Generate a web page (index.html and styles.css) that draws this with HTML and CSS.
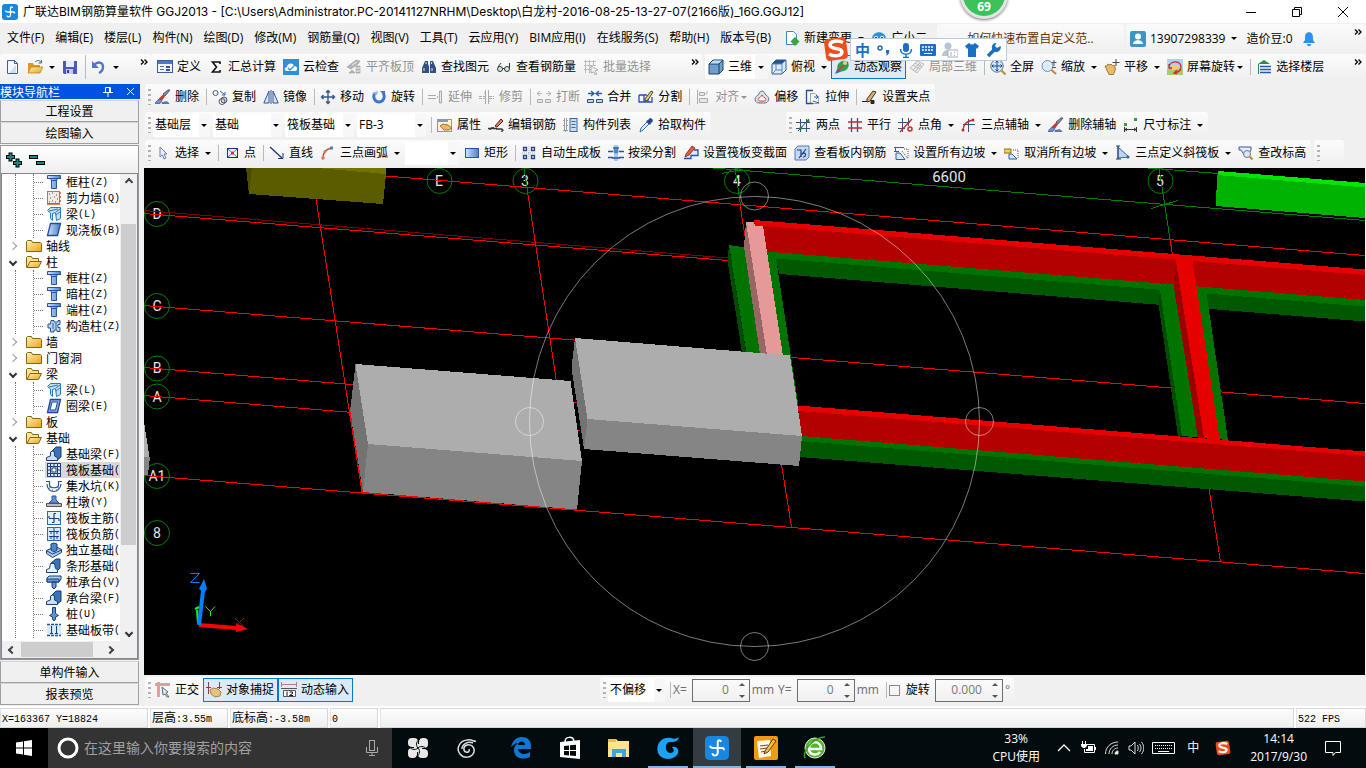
FILE: index.html
```html
<!DOCTYPE html>
<html lang="zh-CN">
<head>
  <meta charset="UTF-8">
  <title>广联达BIM钢筋算量软件 GGJ2013</title>
  <link rel="stylesheet" href="styles.css">
</head>
<body>

<!-- icon sprite -->
<svg class="sprite" aria-hidden="true">
  <defs>
    <linearGradient id="g-blue" x1="0" x2="1"><stop offset="0" stop-color="#cfe4fb"/><stop offset="1" stop-color="#4a7ec8"/></linearGradient>
    <linearGradient id="g-gold" x1="0" y1="0" x2="1" y2="1"><stop offset="0" stop-color="#fff3b0"/><stop offset="1" stop-color="#eba313"/></linearGradient>
  </defs>
  <symbol id="logo" viewBox="0 0 16 16"><rect width="16" height="16" rx="3" fill="#1787e0"/><path d="M8.500 4v7c0 2.500-3.500 2.500-3.500.5M3.500 6.500c0 1.500 1 1.500 2 1.500h7M12.500 9.500V8M8.500 4c0-1.500 2-1.500 2 0" fill="none" stroke="#fff" stroke-width="1.300"/></symbol>
  <symbol id="doc" viewBox="0 0 16 16"><path d="M3.500 1.500h7l3 3v10h-10z" fill="#f6faff" stroke="#3c5f94"/><path d="M10.500 1.500v3h3" fill="none" stroke="#3c5f94"/><path d="M12 6v8H5z" fill="#cfdff2"/></symbol>
  <symbol id="open" viewBox="0 0 16 16"><path d="M1 14V4h5l1 2h6v8z" fill="#d99b26"/><path d="M1 14l3-6h12l-3 6z" fill="url(#g-gold)" stroke="#b47a1b" stroke-width=".7"/><path d="M8 3c2-2 4-2 6 0M14.500 1v3h-3" fill="none" stroke="#4c6680"/></symbol>
  <symbol id="save" viewBox="0 0 16 16"><path d="M1 2h14v13H2l-1-1z" fill="#4c58b5"/><rect x="4" y="2" width="8" height="6" fill="#e6ecff"/><rect x="4" y="10" width="7" height="5" fill="#c7cbe2"/><rect x="5" y="11" width="2" height="3" fill="#333f91"/></symbol>
  <symbol id="undo" viewBox="0 0 16 16"><path d="M3 6c4-4 9-3 9 2 0 3-2 5-4 6" fill="none" stroke="#4b78cf" stroke-width="2.400"/><path d="M1 2v7h7z" fill="#4b78cf"/></symbol>
  <symbol id="define" viewBox="0 0 16 16"><rect x=".5" y="1.500" width="15" height="12" fill="#eef3fc" stroke="#3d5c9e"/><path d="M1 2h14v3H1z" fill="#4a79ca"/><path d="M3 7.500h4M3 10.500h4" stroke="#6d6d6d"/><path d="M9 7h4v2H9zM9 10h4v2H9z" fill="#315492"/></symbol>
  <symbol id="sigma" viewBox="0 0 16 16"><path d="M12 5V3H4.500L8.500 8l-4 5H12v-2" fill="none" stroke="#111" stroke-width="1.600"/></symbol>
  <symbol id="cloud" viewBox="0 0 16 16"><rect width="16" height="16" fill="#2d8fd8"/><path d="M4 12c-3 0-3-4 0-4 0-4 6-5 7-1 4 0 4 5 1 5z" fill="#fff"/><path d="M5 9l2 2 4-4" fill="none" stroke="#2d8fd8" stroke-width="1.300"/></symbol>
  <symbol id="slabtop" viewBox="0 0 16 16"><path d="M1 8l9-7 4 1-2 3-7 5zM3 14l3-3 3 3zM10 7h4v7h-4z" fill="#b5b5b5" stroke="#9a9a9a" stroke-width=".6"/><path d="M6 6l5-3M10 9h4M10 12h4" stroke="#eee"/></symbol>
  <symbol id="find" viewBox="0 0 16 16"><path d="M4 2h3v3l1 2v7H1V9zM9 2h3l3 7v5H9V5z" fill="#31507d"/><path d="M3 9v3M11 9v3M5 3v2M10.500 3v2" stroke="#bcd1f1" stroke-width="1.200"/></symbol>
  <symbol id="glasses" viewBox="0 0 16 16"><circle cx="4" cy="10" r="2.500" fill="#d6e7e9" stroke="#333"/><circle cx="11" cy="10" r="2.500" fill="#d6e7e9" stroke="#333"/><path d="M6.500 9.500h2M2 8l3-4M13.500 9V4" stroke="#333" fill="none"/></symbol>
  <symbol id="batch" viewBox="0 0 16 16"><path d="M1 2.500h12M1 6.500h12M1 10.500h7M2.500 1v13M6.500 1v13M10.500 1v6" stroke="#bdbdbd"/><path d="M8 7l7 4-3 1 2 3-2 1-1-3-3 1z" fill="#eee" stroke="#999" stroke-width=".7"/></symbol>
  <symbol id="cube" viewBox="0 0 16 16"><path d="M1 5l4-4h10v10l-4 4H1z" fill="#6f9fca" stroke="#1e3f66"/><path d="M1 5h10v10M11 5l4-4" fill="none" stroke="#1e3f66"/><path d="M2 4.500l3.500-3H14l-3.500 3z" fill="#c2ddf2"/></symbol>
  <symbol id="cubetop" viewBox="0 0 16 16"><path d="M1 5l4-4h10v10l-4 4H1z" fill="#dcebf8" stroke="#2e5d90"/><path d="M1 5l4-4h10l-4 4z" fill="#27548c"/><path d="M11 5v10M1 5h10M5 5v6h6M5 11l-4 4" fill="none" stroke="#5b86b5"/></symbol>
  <symbol id="orbit" viewBox="0 0 16 16"><path d="M1 15l4-9 6 5z" fill="#2c6fb4"/><ellipse cx="9" cy="7" rx="6" ry="5" transform="rotate(-35 9 7)" fill="#31a24a"/><path d="M3 12l11-9" stroke="#d33" stroke-width="1.400"/><circle cx="11" cy="4" r="2" fill="#b7e3a8"/></symbol>
  <symbol id="local3d" viewBox="0 0 16 16"><path d="M1 9l7-7 7 3-7 9zM4 6l7 4M6 4l7 4M4 11l7-7M6 13l6-8" fill="#ececec" stroke="#bdbdbd"/></symbol>
  <symbol id="fullview" viewBox="0 0 16 16"><circle cx="7" cy="7" r="6.200" fill="#d5e4f5" stroke="#5d6f86"/><path d="M7 2v10M2 7h10M5.500 3.500L7 2l1.500 1.500M5.500 10.500L7 12l1.500-1.500M3.500 5.500L2 7l1.500 1.500M10.500 5.500L12 7l-1.500 1.500" fill="none" stroke="#174a94"/><path d="M11.500 11.500l4 4" stroke="#c98b2b" stroke-width="2.200"/></symbol>
  <symbol id="zoom" viewBox="0 0 16 16"><circle cx="6.500" cy="7" r="5.500" fill="#dcebfa" stroke="#7a8ea8"/><path d="M10.500 11l4.500 4" stroke="#c98b2b" stroke-width="2.200"/><path d="M13 1v6M10.500 3.500h5M11 8.500h4" stroke="#45556b"/></symbol>
  <symbol id="pan" viewBox="0 0 16 16"><path d="M1 7l2 0 1-2 2 1 1-1 1.500 1.500h2l1 3.500-2 5.500H5z" fill="#e6bd6c" stroke="#8b6420" stroke-width=".8"/><path d="M12 0v7M8.500 3.500h7" stroke="#444"/></symbol>
  <symbol id="screenrot" viewBox="0 0 16 16"><rect width="16" height="16" fill="#a8d6ef"/><path d="M0 11l6-3 10 2v6H0z" fill="#a1cf6a"/><rect x="5" y="6" width="6" height="5" fill="#f3cf55"/><path d="M2 9c0-8 12-8 12-1 0 4-3 5-6 6M2 5v4h3M10 11l-3 3 3 1" fill="none" stroke="#de2525" stroke-width="1.300"/></symbol>
  <symbol id="floors" viewBox="0 0 16 16"><path d="M2 5l6-4 6 4z" fill="#2d8a4a"/><path d="M4 7.500h11M4 10.500h11M4 13.500h11" stroke="#245ba6" stroke-width="1.500"/><path d="M2.500 5v10" stroke="#2d8a4a"/></symbol>
  <symbol id="brush" viewBox="0 0 16 16"><path d="M15 1l-5 6-2-2 5-4z" fill="#8894a8" stroke="#49586e"/><path d="M8 5.500l2 2-3 4-4-1z" fill="#c33b2b"/><path d="M0 14.500c3-5 5-5 7-3l-2 3zM7 13.500l5-1 2 2H7z" fill="#6f8fc9" stroke="#35538f" stroke-width=".7"/></symbol>
  <symbol id="copy" viewBox="0 0 16 16"><circle cx="3.500" cy="4" r="2.500" fill="none" stroke="#556"/><circle cx="12" cy="11" r="3" fill="#c3d6ec" stroke="#556"/><circle cx="10" cy="12.500" r="3" fill="none" stroke="#556"/><path d="M8 2l5 4M13 3v3h-3" fill="none" stroke="#2d63b5"/></symbol>
  <symbol id="mirror" viewBox="0 0 16 16"><path d="M6 2v12H.8zM10 2v12h5.200z" fill="#d5e7ff" stroke="#30558e"/><path d="M8 1v14" stroke="#30558e"/></symbol>
  <symbol id="move" viewBox="0 0 16 16"><path d="M8 2v12M2 8h12M6 3.500L8 1.500l2 2M6 12.500l2 2 2-2M3.500 6l-2 2 2 2M12.500 6l2 2-2 2" fill="none" stroke="#35598d" stroke-width="1.400"/></symbol>
  <symbol id="rotate" viewBox="0 0 16 16"><path d="M4 4c-3 4 0 9 4 9s7-5 4-9" fill="none" stroke="#3d75cf" stroke-width="2.800"/><path d="M9 2h5v5z" fill="#3d75cf"/><path d="M1 4l6-2-1 4z" fill="#8cb3ec"/></symbol>
  <symbol id="extend" viewBox="0 0 16 16"><path d="M0 6.500h8M0 9.500h8M9.500 7v2" stroke="#aaa"/><path d="M11.500 2v12h2V2z" fill="#e8e8e8" stroke="#aaa"/></symbol>
  <symbol id="trim" viewBox="0 0 16 16"><path d="M0 7.500h6M0 9.500h6M10 7.500h5M10 9.500h5" stroke="#aaa" stroke-dasharray="3 1"/><path d="M6.500 1v14M9.500 1v14M5 4h2M9 12h2" stroke="#aaa"/></symbol>
  <symbol id="break" viewBox="0 0 16 16"><path d="M1 4.500h5M10 4.500h5M4 2L1 4.500 4 7M12 2l3 2.500L12 7" fill="none" stroke="#b5b5b5"/><path d="M1.500 10.500h5v3h-5zM9.500 10.500h5v3h-5z" fill="#e5e5e5" stroke="#aaa"/></symbol>
  <symbol id="merge" viewBox="0 0 16 16"><path d="M1 4.500h5M10 4.500h5M4 2l3 2.500L4 7M12 2L9 4.500 12 7" fill="none" stroke="#285aa8" stroke-width="1.300"/><path d="M.5 10.500h6v3h-6zM9.500 10.500h6v3h-6z" fill="#bcd7ef" stroke="#355175"/></symbol>
  <symbol id="split" viewBox="0 0 16 16"><path d="M1 6h8M1 6v7h13V8M6 6v7M10 9v4" fill="none" stroke="#244cbc" stroke-width="1.300"/><path d="M7 10l6-8 2 1-5 8-3 1z" fill="#f2c56a" stroke="#222" stroke-width=".8"/></symbol>
  <symbol id="align" viewBox="0 0 16 16"><path d="M2.500 1v14" stroke="#aaa"/><path d="M4.500 3.500h5v3h-5zM4.500 9.500h8v4h-8z" fill="#e6e6e6" stroke="#aaa"/><path d="M12 2v3h-3" stroke="#bbb" fill="none"/></symbol>
  <symbol id="offset" viewBox="0 0 16 16"><path d="M8 2c3 0 2 3 4 4 5 3 2 8-1 8H5c-4 0-6-5-1-8 2-1 1-4 4-4z" fill="#dbe2ea" stroke="#65738a"/><path d="M8 6c1 1 1 2 2 2.500 3 1 2 3.500 0 3.500H6c-2 0-3-2.500 0-3.500C7 8 7 7 8 6z" fill="#fff" stroke="#d83931"/></symbol>
  <symbol id="stretch" viewBox="0 0 16 16"><path d="M8 1.500H1.500v13H8" fill="none" stroke="#23508b" stroke-width="1.300"/><path d="M5.500 4.500h4l4 3v7h-8z" fill="none" stroke="#555" stroke-dasharray="1 1"/><path d="M9 8h4M11 6l2 2-2 2M8 12l6 2" stroke="#3468ac" fill="none"/></symbol>
  <symbol id="pencil" viewBox="0 0 16 16"><path d="M5 10l6-8 3 1-6 9-3 1z" fill="#e4b068" stroke="#333"/><path d="M0 12.500h5M9 11.500h3v3H9z" stroke="#222" fill="#333"/></symbol>
  <symbol id="props" viewBox="0 0 16 16"><rect x=".5" y="2.500" width="14" height="12" fill="#fff4db" stroke="#d98b20"/><path d="M0 2h11v3H0z" fill="#8a9aa9"/><path d="M3 9l3-2 5 1 4 3-3 2H7z" fill="#f0b764" stroke="#8e5d22" stroke-width=".8"/></symbol>
  <symbol id="editbar" viewBox="0 0 16 16"><path d="M0 11.500h9M2 13c0-2 3-3 4-2M8 12h5c3 0 2 3 0 2" fill="none" stroke="#333" stroke-width="1.300"/><path d="M7 9l6-7 2 2-6 6z" fill="#e08a54" stroke="#612"/></symbol>
  <symbol id="list" viewBox="0 0 16 16"><path d="M1 2h3v3H1zM1 7h3v3H1zM1 12h3v2H1z" fill="none" stroke="#345" stroke-dasharray="1 1"/><rect x="7" y="1.500" width="7" height="13" fill="#c8def5" stroke="#3f6696"/><path d="M8.500 4.500h4M8.500 7.500h4M8.500 10.500h4" stroke="#3f6696"/></symbol>
  <symbol id="picker" viewBox="0 0 16 16"><path d="M2 15l1-4 6-6 2 2-6 6z" fill="#dbeefb" stroke="#3d6da8"/><path d="M8 4l4 4 1-2c3-1 2-5-1-5l-2 2z" fill="#254c86"/></symbol>
  <symbol id="twopt" viewBox="0 0 16 16"><path d="M0 5.500h14M0 11.500h14M4.500 2v13M10.500 2v13" stroke="#345183"/><path d="M2 14L13 2" stroke="#2f4a78"/><circle cx="12" cy="4" r="1.600" fill="#27862f"/><circle cx="5" cy="11" r="1.600" fill="#27862f"/></symbol>
  <symbol id="parallel" viewBox="0 0 16 16"><path d="M4.500 1v14M10.500 1v14" stroke="#345183" stroke-width="1.300"/><path d="M1 5h14M1 11h14" stroke="#c42b2b" stroke-width="1.300"/></symbol>
  <symbol id="ptangle" viewBox="0 0 16 16"><path d="M0 5.500h12M4.500 1v14M10.500 1v8M0 11.500h7" stroke="#345183"/><path d="M2 15L14 2" stroke="#c42b2b" stroke-width="1.300"/><circle cx="12" cy="12" r="2" fill="none" stroke="#c42b2b" stroke-width="1.500"/></symbol>
  <symbol id="auxaxis" viewBox="0 0 16 16"><path d="M7.500 2v13M2 7.500h12" stroke="#345183"/><path d="M2 14C2 8 5 4 12 3" fill="none" stroke="#c42b2b" stroke-width="1.400"/><circle cx="12" cy="3" r="1.500" fill="#c42b2b"/><circle cx="2" cy="13" r="1.500" fill="#c42b2b"/></symbol>
  <symbol id="dim" viewBox="0 0 16 16"><path d="M1 6h3v3H1zM11 1h3v3h-3z" fill="#3e9b44"/><path d="M1.500 10v5M13.500 10v5M2 12.500h11M4 11l-2 1.500L4 14M11 11l2 1.500-2 1.500" fill="none" stroke="#333"/></symbol>
  <symbol id="select" viewBox="0 0 16 16"><path d="M5 2v10l2.500-2L9 14l2-1-2-4h3z" fill="#e8eefb" stroke="#6b7fae"/></symbol>
  <symbol id="point" viewBox="0 0 16 16"><rect x="3.500" y="3.500" width="10" height="9" fill="#eff3ff" stroke="#1c2f86"/><path d="M4 4l9 8M13 4l-9 8" stroke="#5a6aa5"/><circle cx="8.500" cy="8" r="1.600" fill="#d22"/></symbol>
  <symbol id="line" viewBox="0 0 16 16"><path d="M1 2l12 11" stroke="#173682" stroke-width="1.300"/><path d="M9 13.500h5V8" fill="none" stroke="#173682"/></symbol>
  <symbol id="arc" viewBox="0 0 16 16"><path d="M3 13C3 7 6 4 12 3" fill="none" stroke="#c04a2b" stroke-width="1.400"/><circle cx="3" cy="13" r="1.800" fill="#e07b54"/><circle cx="11.500" cy="3" r="1.800" fill="#5d7fb8"/><circle cx="5" cy="6.500" r="1.500" fill="#e07b54"/></symbol>
  <symbol id="rect" viewBox="0 0 16 16"><rect x="1.500" y="3.500" width="13" height="9" fill="url(#g-blue)" stroke="#2c4fb5"/></symbol>
  <symbol id="autoslab" viewBox="0 0 16 16"><path d="M2.500 2.500h3v3h-3zM10.500 2.500h3v3h-3zM2.500 10.500h3v3h-3zM10.500 10.500h3v3h-3z" fill="#e7efff" stroke="#28437d" stroke-width="1.300"/><path d="M8 1v14M1 8h14" stroke="#9ab" stroke-dasharray="1 1"/></symbol>
  <symbol id="beamsplit" viewBox="0 0 16 16"><path d="M6 0h4v16H6z" fill="#aac7f3"/><path d="M0 6.500h5M11 6.500h5M0 12.500h5M11 12.500h5M5 3h6M4 13h8" stroke="#28539f" stroke-width="1.300"/><circle cx="8" cy="6" r="2.500" fill="#4f84cf"/></symbol>
  <symbol id="section" viewBox="0 0 16 16"><path d="M1 13.500h7v-3h7V5h-4" fill="#dcebff" stroke="#2454aa" stroke-width="1.300"/><path d="M3 9l6-8 3 2-6 7-4 2z" fill="#e85b45" stroke="#7b2015" stroke-width=".8"/></symbol>
  <symbol id="viewbar" viewBox="0 0 16 16"><path d="M1 4l3-3h11v11l-3 3H1z" fill="#c4d9f1" stroke="#5479ae"/><path d="M3 5h4v7M12 4L5 13M8 9c4-3 5 3 1 3" fill="none" stroke="#1d3f77" stroke-width="1.200"/></symbol>
  <symbol id="slope" viewBox="0 0 16 16"><path d="M1 2.500h10M1 6.500h5M2.500 2v5M3 14.500V8h4l5 6.500z" fill="#d7e6fb" stroke="#2f5faf"/><path d="M9 6l6 8M11 4h4v10" fill="none" stroke="#555" stroke-dasharray="1 1"/></symbol>
  <symbol id="unslope" viewBox="0 0 16 16"><path d="M0 4h7v4H0z" fill="#f5cf45" stroke="#946f12"/><path d="M5 14V9h3l5 5z" fill="#d7e6fb" stroke="#2f5faf"/><path d="M9 5h5v9" fill="none" stroke="#555" stroke-dasharray="1 1"/></symbol>
  <symbol id="tilted" viewBox="0 0 16 16"><path d="M3 2v11l11-1z" fill="#bcd4f6" stroke="#2d62ba"/><path d="M1 1h4M3 1v13M1 14h5" stroke="#24355d"/><circle cx="13" cy="12" r="1.500" fill="#2d62ba"/></symbol>
  <symbol id="elev" viewBox="0 0 16 16"><path d="M1 2h12v3l-3 5-3 1-4-6H1z" fill="#e2ecfa" stroke="#355b9b"/><circle cx="9" cy="9" r="3.500" fill="#dbe9f6" stroke="#777"/><path d="M11.500 11.500l3 3" stroke="#bd8735" stroke-width="2"/></symbol>
  <symbol id="newchg" viewBox="0 0 16 16"><path d="M2.500 1.500h7l3 3v10h-10z" fill="#fff" stroke="#3a86be"/><path d="M11 7l4.500 4.500L11 16l-4.500-4.500z" fill="#3aa63a"/></symbol>
  <symbol id="face" viewBox="0 0 16 16"><path d="M1 9c0-9 14-9 14 0 0 4-14 4-14 0z" fill="#2a93de"/><circle cx="5" cy="8" r="2" fill="#fff"/><circle cx="11" cy="8" r="2" fill="#fff"/><circle cx="5" cy="8" r="1"/><circle cx="11" cy="8" r="1"/></symbol>
  <symbol id="user" viewBox="0 0 16 16"><rect width="16" height="16" rx="2" fill="#3f93c9"/><circle cx="8" cy="5.500" r="3" fill="#fff"/><path d="M3 13c0-5 10-5 10 0z" fill="#fff"/></symbol>
  <symbol id="bell" viewBox="0 0 16 16"><path d="M8 1c4 1 4 3 4 8l2 3H2l2-3c0-5 0-7 4-8zM6 13h4c0 3-4 3-4 0z" fill="#2f8ff2"/></symbol>
  <symbol id="more" viewBox="0 0 8 8"><path d="M1 1.500L3.500 4 1 6.500M4.500 1.500L7 4 4.500 6.500" fill="none" stroke="#000" stroke-width="1.300"/></symbol>
  <symbol id="ortho" viewBox="0 0 16 16"><path d="M0 2.500h15M3.500 0v15" stroke="#dba0a0" stroke-width="3"/><path d="M7 5l6 5-2 1 3 4-2 0-2-3-2 1z" fill="#dfe6ec" stroke="#5b6d7c"/></symbol>
  <symbol id="snap" viewBox="0 0 16 16"><path d="M2.500 0v12M13.500 0v7M0 5.500h5M11 5.500h5" stroke="#8d3b3b"/><path d="M4 8l3-2 5 1 3 3-1 4-5 1-4-3z" fill="#e6c37a" stroke="#8f7134" stroke-width=".8"/></symbol>
  <symbol id="dyn" viewBox="0 0 16 16"><path d="M.5 0v5M15.500 0v5M0 2.500h16" stroke="#b77d7d"/><path d="M0 6.500h16M2.500 8.500h12v6h-12z" fill="#fff" stroke="#555"/><path d="M6 9.500V14M8.500 10h3v1.500l-3 2h3.500" fill="none" stroke="#111"/></symbol>
  <!-- tree icons -->
  <symbol id="fold" viewBox="0 0 16 16"><path d="M.5 13.500v-10l1-1h4l1 2h8l1 1v8z" fill="url(#g-gold)" stroke="#8a6412"/></symbol>
  <symbol id="foldopen" viewBox="0 0 16 16"><path d="M.5 13.500v-10l1-1h4l1 2h6v3" fill="#ffe58a" stroke="#8a6412"/><path d="M1 13.500l3-6h11.500l-3 6z" fill="url(#g-gold)" stroke="#8a6412"/></symbol>
  <symbol id="col" viewBox="0 0 16 16"><path d="M1.500 1.500h13v3h-3l-1 2v8h-5v-8l-1-2h-3z" fill="url(#g-blue)" stroke="#2456a6"/><path d="M1 4.500h14M5 6.500h6" stroke="#2456a6"/></symbol>
  <symbol id="wallq" viewBox="0 0 16 16"><rect x="1.500" y="1.500" width="12" height="12" fill="#f1e9e6" stroke="#a77"/><path d="M3 4h1M6 3h1M10 5h1M4 8h1M8 7h1M6 11h1M11 9h1M9 12h1M3 12h1" stroke="#555"/><path d="M13 3h2M13 7h2M13 11h2M1 14h13" stroke="#c75b22" stroke-width="1.500"/></symbol>
  <symbol id="beam" viewBox="0 0 16 16"><path d="M1.500 4.500l3-3h10v11l-4 2-1-8-3 1v7l-2-2V7z" fill="#bfe1f8" stroke="#2c79b8"/><path d="M3 5l9-2M10 6l4-3M10 9l4-3" stroke="#2c79b8"/></symbol>
  <symbol id="slab" viewBox="0 0 16 16"><path d="M4.500 1.500h10l-3 12h-10z" fill="url(#g-blue)" stroke="#1e4da0" stroke-width="1.300"/></symbol>
  <symbol id="gzcol" viewBox="0 0 16 16"><path d="M5 2.500h3v1.500h4v-1.500h2v4h-2v3h2v4h-3V12H8v2H4.500v-4H2V6h2.500z" fill="#bcd5f5" stroke="#24539b"/><path d="M7 5v6M10 5v6" stroke="#24539b"/></symbol>
  <symbol id="ring" viewBox="0 0 16 16"><path d="M4.500 1.500h10l-3 13h-10z" fill="#8cb0e8" stroke="#1d459b" stroke-width="1.300"/><path d="M6 4h5.500l-2 8H4z" fill="#fff" stroke="#1d459b"/></symbol>
  <symbol id="fbeam" viewBox="0 0 16 16"><path d="M4 7l6-6h5v10l-5 4z" fill="#3b74b4" stroke="#173f73"/><path d="M.5 14.500v-3l4-1.500V6l2-1 2 1v4l3 1.500v3z" fill="#cce1f6" stroke="#173f73"/></symbol>
  <symbol id="raft" viewBox="0 0 16 16"><rect x="1.500" y="1.500" width="13" height="13" fill="#d5e6fb" stroke="#18437f"/><path d="M4.500 1v14M11.500 1v14M1 4.500h14M1 11.500h14M8 1v3M8 12v3M1 8h3M12 8h3" stroke="#18437f"/><rect x="6" y="6" width="4" height="4" fill="#fff" stroke="#18437f"/></symbol>
  <symbol id="pit" viewBox="0 0 16 16"><path d="M0 3.500h3.500v4c1 3 8 3 9 0v-4H16M1 6c0 10 13 10 14 0" fill="none" stroke="#2456a6" stroke-width="1.200"/><path d="M3 10h1M6 12h1M10 12h1M12 10h1" stroke="#2456a6"/></symbol>
  <symbol id="pier" viewBox="0 0 16 16"><path d="M6 2h4v4l3 3H3l3-3z" fill="#5f91d4" stroke="#2456a6"/><path d="M.5 9.500h15v3H.5z" fill="#bbb" stroke="#555"/></symbol>
  <symbol id="mainbar" viewBox="0 0 16 16"><rect x="1.500" y="1.500" width="13" height="13" fill="#e5f0ff" stroke="#2f66b8"/><path d="M3 8.500h10M8 3.500v9M8 3.500h2M3 6v2M13 9v2M6 12.500h2" fill="none" stroke="#173e85" stroke-width="1.200"/></symbol>
  <symbol id="negbar" viewBox="0 0 16 16"><rect x="1.500" y="1.500" width="13" height="13" fill="#d6e6fb" stroke="#2f66b8"/><path d="M8 2v12M3 5.500h10M3 10.500h10M5 5v3M11 5v3M5 10v3M11 10v3" stroke="#173e85"/></symbol>
  <symbol id="isolated" viewBox="0 0 16 16"><path d="M.5 8.500l9-4 6 3v3l-9 5-6-4z" fill="#a9cdf1" stroke="#173f73"/><path d="M1 9l5.500 3 9-4" fill="none" stroke="#173f73"/><path d="M5 2l3-1 3 1v6l-3 2-3-2z" fill="#4d86c7" stroke="#173f73"/></symbol>
  <symbol id="strip" viewBox="0 0 16 16"><path d="M5 5l5-4h4v9l-4 4z" fill="#3b74b4" stroke="#173f73"/><path d="M.5 14.500v-3l3-1 1-5h4l1 5 2 1v3z" fill="#e8f3ff" stroke="#173f73"/></symbol>
  <symbol id="cap" viewBox="0 0 16 16"><path d="M1 4l2-2h12v3l-2 3H1z" fill="#a9cdf1" stroke="#173f73"/><path d="M1 5h12v3H1zM6 8h4v5l-2 2-2-2z" fill="#679bdb" stroke="#173f73"/></symbol>
  <symbol id="pile" viewBox="0 0 16 16"><path d="M6.500 1.500h3v6l3 2-3 1.500v2L8 15l-1.500-2v-2l-3-1.500 3-2z" fill="#5f91d4" stroke="#173f73"/></symbol>
  <symbol id="band" viewBox="0 0 16 16"><path d="M1 3h14v10H1z" fill="#d9e9fb"/><path d="M1 2.500h14M1 13.500h14" stroke="#2456a6" stroke-width="1.300" stroke-dasharray="3 1"/><path d="M5.500 4v8M10.500 4v8M4 11.500h3M9 11.500h3" stroke="#173f73"/></symbol>
  <symbol id="sogou" viewBox="0 0 26 26"><rect x="2" y="2" width="22" height="22" rx="4" fill="#f04c1c" transform="rotate(-8 13 13)"/><path d="M20 6.500C15 4 7 5 7 9c0 5 12 2 12 7 0 4-8 5-13 2" fill="none" stroke="#fff" stroke-width="3.500"/></symbol>
</svg>

<header class="titlebar">
  <svg class="ico"><use href="#logo"/></svg>
  <h1>广联达BIM钢筋算量软件 GGJ2013 - [C:\Users\Administrator.PC-20141127NRHM\Desktop\白龙村-2016-08-25-13-27-07(2166版)_16G.GGJ12]</h1>
  <div class="win-controls">
    <button aria-label="最小化"><svg width="12" height="12"><path d="M1 6.500h10" stroke="#000"/></svg></button>
    <button aria-label="还原"><svg width="12" height="12"><path d="M1.500 3.500h7v7h-7zM3.500 3v-1.500h7v7H9" fill="none" stroke="#000"/></svg></button>
    <button aria-label="关闭"><svg width="12" height="12"><path d="M1 1l10 10M11 1L1 11" stroke="#000"/></svg></button>
  </div>
  <div class="speed-ball">69</div>
</header>

<nav class="menubar">
  <div class="menus">
    <button>文件(F)</button><button>编辑(E)</button><button>楼层(L)</button><button>构件(N)</button><button>绘图(D)</button><button>修改(M)</button><button>钢筋量(Q)</button><button>视图(V)</button><button>工具(T)</button><button>云应用(Y)</button><button>BIM应用(I)</button><button>在线服务(S)</button><button>帮助(H)</button><button>版本号(B)</button>
  </div>
  <button class="tbtn"><svg class="ico"><use href="#newchg"/></svg>新建变更<i class="caret"></i></button>
  <button class="tbtn"><svg class="ico"><use href="#face"/></svg>广小二</button>
  <div class="tip"><a href="#">如何快速布置自定义范..</a></div>
  <div class="account">
    <button class="tbtn"><svg class="ico"><use href="#user"/></svg>13907298339<i class="caret"></i></button>
    <span class="beans">造价豆:0</span>
    <button class="tbtn" aria-label="消息"><svg class="ico"><use href="#bell"/></svg></button>
    <button class="more" aria-label="更多"><svg><use href="#more"/></svg></button>
  </div>
  <div class="ime">
    <svg class="ime-logo"><use href="#sogou"/></svg>
    <div class="ime-bar">
      <span>中</span>
      <svg width="16" height="16"><circle cx="4" cy="6" r="2" fill="none" stroke="#1a6fc4" stroke-width="1.500"/><path d="M10 8h3c1 3-1 5-3 6 1-2 1-3 0-3z" fill="#1a6fc4"/></svg>
      <svg width="16" height="16"><rect x="5" y="1" width="6" height="9" rx="3" fill="#1a6fc4"/><path d="M2.500 7c0 7 11 7 11 0M8 12v4M5 15.500h6" fill="none" stroke="#1a6fc4" stroke-width="1.500"/></svg>
      <svg width="16" height="16"><rect x="0" y="2" width="16" height="12" rx="1" fill="#1a6fc4"/><path d="M2 5h12M2 8h12" stroke="#fff" stroke-width="1.500" stroke-dasharray="2 1"/><path d="M4 11.500h8" stroke="#fff"/></svg>
      <svg width="16" height="16"><circle cx="6" cy="4" r="3.500" fill="#b8c3d3"/><path d="M0 14c0-8 12-8 12 0z" fill="#b8c3d3"/><rect x="6" y="8" width="10" height="7" fill="#fff" stroke="#a4b0c0"/><path d="M9 10v4M12.500 10v1M12.500 13v1" stroke="#a4b0c0"/></svg>
      <svg width="16" height="16"><path d="M1 4l4-3c2 2 4 2 6 0l4 3-2 3-1-1v9H4V6L3 7z" fill="#1a6fc4"/></svg>
      <svg width="16" height="16"><path d="M2 14l6-6" stroke="#1a6fc4" stroke-width="3.500"/><path d="M14.500 4a4.500 4.500 0 1 1-4-3L9 4l2 2z" fill="#1a6fc4"/></svg>
    </div>
  </div>
</nav>

<div class="toprow">
  <div class="group file-group">
    <button class="tbtn" aria-label="新建"><svg class="ico"><use href="#doc"/></svg></button>
    <button class="tbtn" aria-label="打开"><svg class="ico"><use href="#open"/></svg><i class="caret"></i></button>
    <button class="tbtn" aria-label="保存"><svg class="ico"><use href="#save"/></svg></button>
    <i class="sep"></i>
    <button class="tbtn" aria-label="撤销"><svg class="ico"><use href="#undo"/></svg><i class="caret"></i></button>
    <button class="more" aria-label="更多"><svg><use href="#more"/></svg></button>
  </div>
  <div class="group calc-group">
    <button class="tbtn"><svg class="ico"><use href="#define"/></svg>定义</button>
    <button class="tbtn"><svg class="ico"><use href="#sigma"/></svg>汇总计算</button>
    <button class="tbtn"><svg class="ico"><use href="#cloud"/></svg>云检查</button>
    <button class="tbtn" disabled><svg class="ico"><use href="#slabtop"/></svg>平齐板顶</button>
    <button class="tbtn"><svg class="ico"><use href="#find"/></svg>查找图元</button>
    <button class="tbtn"><svg class="ico"><use href="#glasses"/></svg>查看钢筋量</button>
    <button class="tbtn" disabled><svg class="ico"><use href="#batch"/></svg>批量选择</button>
    <button class="more" aria-label="更多"><svg><use href="#more"/></svg></button>
  </div>
  <div class="group view-group">
    <button class="tbtn white"><svg class="ico"><use href="#cube"/></svg>三维<i class="caret"></i></button>
    <button class="tbtn"><svg class="ico"><use href="#cubetop"/></svg>俯视<i class="caret"></i></button>
    <button class="tbtn on"><svg class="ico"><use href="#orbit"/></svg>动态观察</button>
    <button class="tbtn" disabled><svg class="ico"><use href="#local3d"/></svg>局部三维</button>
    <i class="sep"></i>
    <button class="tbtn"><svg class="ico"><use href="#fullview"/></svg>全屏</button>
    <button class="tbtn"><svg class="ico"><use href="#zoom"/></svg>缩放<i class="caret"></i></button>
    <button class="tbtn"><svg class="ico"><use href="#pan"/></svg>平移<i class="caret"></i></button>
    <button class="tbtn"><svg class="ico"><use href="#screenrot"/></svg>屏幕旋转<i class="caret tight"></i></button>
    <i class="sep"></i>
    <button class="tbtn"><svg class="ico"><use href="#floors"/></svg>选择楼层</button>
    <button class="more" aria-label="更多"><svg><use href="#more"/></svg></button>
  </div>
</div>

<div class="main">
  <aside class="sidebar">
    <div class="side-title"><span>模块导航栏</span>
      <svg width="10" height="10"><path d="M2.500 5V.5h5V5M0 5.500h10M5 6v4M6.500 1v4" fill="none" stroke="#fff"/></svg>
      <svg width="9" height="9"><path d="M1 1l7 7M8 1L1 8" stroke="#fff"/></svg>
    </div>
    <button class="side-btn">工程设置</button>
    <button class="side-btn">绘图输入</button>
    <div class="side-panel">
      <div class="side-tools">
        <svg width="40" height="18"><path d="M0 6h9M4.500 1.500v9M7 12h9M11.500 7.500v9M23 6h9M30 12h9" stroke="#000" stroke-width="4"/><path d="M1 6h7M4.500 2.500v7M8 12h7M11.500 8.500v7M24 6h7M31 12h7" stroke="#0e8a8a" stroke-width="2"/></svg>
      </div>
      <div class="tree-box">
        <div class="tree-row">
          <ul class="tree">
            <li class="kids">
              <ul>
                <li><svg class="ico"><use href="#col"/></svg>框柱<b>(Z)</b></li>
                <li><svg class="ico"><use href="#wallq"/></svg>剪力墙<b>(Q)</b></li>
                <li><svg class="ico"><use href="#beam"/></svg>梁<b>(L)</b></li>
                <li><svg class="ico"><use href="#slab"/></svg>现浇板<b>(B)</b></li>
              </ul>
            </li>
            <li class="dir"><i class="chev"></i><svg class="ico"><use href="#fold"/></svg>轴线</li>
            <li class="dir open"><i class="chev"></i><svg class="ico"><use href="#foldopen"/></svg>柱</li>
            <li class="kids">
              <ul>
                <li><svg class="ico"><use href="#col"/></svg>框柱<b>(Z)</b></li>
                <li><svg class="ico"><use href="#col"/></svg>暗柱<b>(Z)</b></li>
                <li><svg class="ico"><use href="#col"/></svg>端柱<b>(Z)</b></li>
                <li><svg class="ico"><use href="#gzcol"/></svg>构造柱<b>(Z)</b></li>
              </ul>
            </li>
            <li class="dir"><i class="chev"></i><svg class="ico"><use href="#fold"/></svg>墙</li>
            <li class="dir"><i class="chev"></i><svg class="ico"><use href="#fold"/></svg>门窗洞</li>
            <li class="dir open"><i class="chev"></i><svg class="ico"><use href="#foldopen"/></svg>梁</li>
            <li class="kids">
              <ul>
                <li><svg class="ico"><use href="#beam"/></svg>梁<b>(L)</b></li>
                <li><svg class="ico"><use href="#ring"/></svg>圈梁<b>(E)</b></li>
              </ul>
            </li>
            <li class="dir"><i class="chev"></i><svg class="ico"><use href="#fold"/></svg>板</li>
            <li class="dir open"><i class="chev"></i><svg class="ico"><use href="#foldopen"/></svg>基础</li>
            <li class="kids">
              <ul>
                <li><svg class="ico"><use href="#fbeam"/></svg>基础梁<b>(F)</b></li>
                <li class="current"><svg class="ico"><use href="#raft"/></svg>筏板基础<b>(</b></li>
                <li><svg class="ico"><use href="#pit"/></svg>集水坑<b>(K)</b></li>
                <li><svg class="ico"><use href="#pier"/></svg>柱墩<b>(Y)</b></li>
                <li><svg class="ico"><use href="#mainbar"/></svg>筏板主筋<b>(</b></li>
                <li><svg class="ico"><use href="#negbar"/></svg>筏板负筋<b>(</b></li>
                <li><svg class="ico"><use href="#isolated"/></svg>独立基础<b>(</b></li>
                <li><svg class="ico"><use href="#strip"/></svg>条形基础<b>(</b></li>
                <li><svg class="ico"><use href="#cap"/></svg>桩承台<b>(V)</b></li>
                <li><svg class="ico"><use href="#fbeam"/></svg>承台梁<b>(F)</b></li>
                <li><svg class="ico"><use href="#pile"/></svg>桩<b>(U)</b></li>
                <li><svg class="ico"><use href="#band"/></svg>基础板带<b>(</b></li>
              </ul>
            </li>
          </ul>
          <div class="vbar"><i class="chev up"></i><div class="vtrack"><div class="vthumb"></div></div><i class="chev down"></i></div>
        </div>
        <div class="hbar"><i class="chev left"></i><div class="hthumb"></div><i class="chev right"></i></div>
      </div>
    </div>
    <button class="side-btn">单构件输入</button>
    <button class="side-btn">报表预览</button>
  </aside>

  <section class="work">
    <div class="rows">
      <div class="group">
        <i class="grip"></i>
        <button class="tbtn"><svg class="ico"><use href="#brush"/></svg>删除</button>
        <i class="sep"></i>
        <button class="tbtn"><svg class="ico"><use href="#copy"/></svg>复制</button>
        <button class="tbtn"><svg class="ico"><use href="#mirror"/></svg>镜像</button>
        <i class="sep"></i>
        <button class="tbtn"><svg class="ico"><use href="#move"/></svg>移动</button>
        <button class="tbtn"><svg class="ico"><use href="#rotate"/></svg>旋转</button>
        <i class="sep"></i>
        <button class="tbtn" disabled><svg class="ico"><use href="#extend"/></svg>延伸</button>
        <button class="tbtn" disabled><svg class="ico"><use href="#trim"/></svg>修剪</button>
        <i class="sep"></i>
        <button class="tbtn" disabled><svg class="ico"><use href="#break"/></svg>打断</button>
        <button class="tbtn"><svg class="ico"><use href="#merge"/></svg>合并</button>
        <button class="tbtn"><svg class="ico"><use href="#split"/></svg>分割</button>
        <i class="sep"></i>
        <button class="tbtn" disabled><svg class="ico"><use href="#align"/></svg>对齐<i class="caret tight"></i></button>
        <button class="tbtn"><svg class="ico"><use href="#offset"/></svg>偏移</button>
        <button class="tbtn"><svg class="ico"><use href="#stretch"/></svg>拉伸</button>
        <i class="sep"></i>
        <button class="tbtn"><svg class="ico"><use href="#pencil"/></svg>设置夹点</button>
      </div>

      <div class="split-row">
        <div class="group">
          <i class="grip"></i>
          <label class="combo narrow"><select aria-label="楼层"><option>基础层</option></select></label>
          <label class="combo"><select aria-label="构件类型"><option>基础</option></select></label>
          <label class="combo"><select aria-label="构件"><option>筏板基础</option></select></label>
          <label class="combo"><select aria-label="名称"><option>FB-3</option></select></label>
          <i class="sep"></i>
          <button class="tbtn"><svg class="ico"><use href="#props"/></svg>属性</button>
          <button class="tbtn"><svg class="ico"><use href="#editbar"/></svg>编辑钢筋</button>
          <button class="tbtn"><svg class="ico"><use href="#list"/></svg>构件列表</button>
          <button class="tbtn"><svg class="ico"><use href="#picker"/></svg>拾取构件</button>
        </div>
        <div class="group axis-group">
          <i class="grip"></i>
          <button class="tbtn"><svg class="ico"><use href="#twopt"/></svg>两点</button>
          <button class="tbtn"><svg class="ico"><use href="#parallel"/></svg>平行</button>
          <button class="tbtn"><svg class="ico"><use href="#ptangle"/></svg>点角<i class="caret"></i></button>
          <button class="tbtn"><svg class="ico"><use href="#auxaxis"/></svg>三点辅轴<i class="caret"></i></button>
          <button class="tbtn"><svg class="ico"><use href="#brush"/></svg>删除辅轴</button>
          <button class="tbtn"><svg class="ico"><use href="#dim"/></svg>尺寸标注<i class="caret"></i></button>
        </div>
      </div>

      <div class="split-row">
        <div class="group">
          <i class="grip"></i>
          <button class="tbtn"><svg class="ico"><use href="#select"/></svg>选择<i class="caret"></i></button>
          <i class="sep"></i>
          <button class="tbtn"><svg class="ico"><use href="#point"/></svg>点</button>
          <i class="sep"></i>
          <button class="tbtn"><svg class="ico"><use href="#line"/></svg>直线</button>
          <button class="tbtn"><svg class="ico"><use href="#arc"/></svg>三点画弧<i class="caret"></i></button>
          <label class="combo method"><select aria-label="画法"><option></option></select></label>
          <button class="tbtn"><svg class="ico"><use href="#rect"/></svg>矩形</button>
          <i class="sep"></i>
          <button class="tbtn"><svg class="ico"><use href="#autoslab"/></svg>自动生成板</button>
          <button class="tbtn"><svg class="ico"><use href="#beamsplit"/></svg>按梁分割</button>
          <button class="tbtn"><svg class="ico"><use href="#section"/></svg>设置筏板变截面</button>
          <button class="tbtn"><svg class="ico"><use href="#viewbar"/></svg>查看板内钢筋</button>
          <button class="tbtn"><svg class="ico"><use href="#slope"/></svg>设置所有边坡<i class="caret"></i></button>
          <button class="tbtn"><svg class="ico"><use href="#unslope"/></svg>取消所有边坡<i class="caret"></i></button>
          <button class="tbtn"><svg class="ico"><use href="#tilted"/></svg>三点定义斜筏板<i class="caret"></i></button>
          <button class="tbtn"><svg class="ico"><use href="#elev"/></svg>查改标高</button>
        </div>
        <div class="group stub"><i class="grip"></i></div>
      </div>
    </div>

    <div class="view">
      <svg class="scene" viewBox="144 168 1221 507" preserveAspectRatio="xMinYMin slice">
        <!-- axis bubbles -->
        <g fill="none" stroke="#008000">
          <circle cx="439.500" cy="181" r="12.500"/><circle cx="525.500" cy="181" r="12.500"/><circle cx="737" cy="181" r="12.500"/><circle cx="1160.500" cy="181" r="12.500"/>
          <circle cx="157" cy="214" r="12.500"/><circle cx="157" cy="306" r="12.500"/><circle cx="157" cy="368.500" r="12.500"/><circle cx="157" cy="396.500" r="12.500"/><circle cx="157" cy="476" r="12.500"/><circle cx="157" cy="533" r="12.500"/>
        </g>
        <g class="axis-text">
          <text x="439" y="186">E</text><text x="525" y="186">3</text><text x="737" y="186">4</text><text x="1160" y="186">5</text>
          <text x="157" y="219">D</text><text x="157" y="311">C</text><text x="157" y="373">B</text><text x="157" y="402">A</text><text x="157" y="481">A1</text><text x="157" y="538">8</text>
        </g>
        <text class="dim-text" x="949" y="182">6600</text>
        <!-- grid -->
        <g fill="none" stroke="#f00" shape-rendering="crispEdges">
          <path stroke="#800000" d="M144 210.500L728 258"/>
          <path d="M386 176L1365 255.500M144 213.500L728 260.500M144 305.500L1365 403.500M144 367.500L578 403M144 395.500L580 431M144 475.500L1365 573.500"/>
          <path d="M316 199L362 492M527 188L557 385M740 205L791.500 527M1170 239L1220.500 562"/>
          <path stroke="#008000" d="M713 168L1365 220.500M1148 168L1218 173.500M524 168L527 188M735 168L740.500 205M1159 168L1170 239M1151 208.500L1178 200.500M722 173.500L741 169.500"/>
        </g>
        <g shape-rendering="crispEdges">
          <!-- olive block -->
          <path fill="#4d4d00" d="M246 168h6l-3 26z"/><path fill="#5b5b00" d="M252 168h65l69 6-3 30-134-10z"/><path fill="#737300" d="M317 168h69v6z"/>
          <!-- green block -->
          <path fill="#00b300" d="M1217.500 175L1365 187v31l-149.500-12z"/><path fill="#00e600" d="M1218 171l147 12v4.500L1217.500 175z"/>
          <!-- foundation strips -->
          <path fill="#007300" d="M729 245l38 6 9 7.500L798.500 406H755z"/><path fill="#004d00" d="M729 245l-1.500 16L742 352h4z"/>
          <path fill="#007300" d="M766 251.500L1365 300v6.500L775.500 258.500z"/><path fill="#005900" d="M775.500 258.500L1365 306.500v15L779.500 274z"/>
          <path fill="#007300" d="M1160 290.500V283l36 3 10.500 7L1228 440l-46-4z"/><path fill="#004d00" d="M1160 290.500l-1.500 14L1178 436h4z"/>
          <!-- beams -->
          <path fill="#b30000" d="M763 226L1365 274.500V300L766 251.500z"/><path fill="#e60000" d="M754 220L1365 269.500v5.500L763 226h-8z"/>
          <path fill="#900" d="M1176.500 258.500L1173.500 285 1198 438h6z"/><path fill="#e60000" d="M1175.500 258.500l17 2L1220 441l-16-3z"/>
          <path fill="#966" d="M746 222l-2 24.500L760 354h7z"/><path fill="#e69999" d="M746 222h8l1 4h8l20 130-16-1z"/>
          <path fill="#e60000" d="M797.500 405.500L1365 451.500v5L798.500 411.500z"/><path fill="#b30000" d="M798.500 411L1365 456v26L801.500 436z"/>
          <path fill="#007300" d="M801.500 436L1365 481.500v5L800 441z"/><path fill="#005900" d="M800 441L1365 486.500v15L800 457z"/>
          <!-- raft blocks -->
          <path fill="#adadad" d="M355.500 364l215 17L582 461.500l-214-17z"/><path fill="#737373" d="M355.500 364L368 444.500 363 492l-13-80.500z"/><path fill="#858585" d="M368 444l214 17-5 48.500L363 492z"/>
          <path fill="#adadad" d="M575 338l215 17.500L802 436l-214.500-17z"/><path fill="#737373" d="M575 338l12.500 81L584 449l-12.500-81z"/><path fill="#858585" d="M587.500 419L802 436l-3 30-215-17z"/>
          <path fill="#adadad" d="M144 422l5.500 35H144z"/><path fill="#858585" d="M144 457h6l-2 18h-4z"/>
          <path fill="none" stroke="#f00" stroke-dasharray="12 6" d="M350 412l12.500 80"/>
          <path fill="none" stroke="#f00" stroke-dasharray="26 12" d="M362.500 492.500L577 510"/>
        </g>
        <!-- orbit ring -->
        <g fill="none" stroke="#fff" stroke-opacity=".48">
          <circle cx="754.500" cy="421.500" r="225"/><circle cx="754.500" cy="196" r="14"/><circle cx="754.500" cy="646.500" r="14"/><circle cx="529.500" cy="421.500" r="14"/><circle cx="979.500" cy="421.500" r="14"/>
        </g>
        <!-- coordinate tripod -->
        <path d="M199 625l37 3" stroke="#f00" stroke-width="4"/><path d="M236 623v9l12-3z" fill="#f00"/>
        <path d="M198 624l-1-14M195 609l4-2" stroke="#0f0" stroke-width="2"/>
        <path d="M199 625l4-34" stroke="#0080ff" stroke-width="4"/><path d="M199 589l5-10 3 10-3 4z" fill="#0080ff"/>
        <path d="M190.500 573.500h9l-9 9h9" fill="none" stroke="#0080ff"/><path d="M205.500 606.500l5 5 4.500-5M210.500 611v5" fill="none" stroke="#0f0"/><path d="M235 618l9 9M244 618l-9 9" stroke="#b00000"/>
      </svg>
    </div>

    <div class="snapbar">
      <div class="group">
        <i class="grip"></i>
        <button class="tbtn"><svg class="ico"><use href="#ortho"/></svg>正交</button>
        <button class="tbtn on"><svg class="ico"><use href="#snap"/></svg>对象捕捉</button>
        <button class="tbtn on"><svg class="ico"><use href="#dyn"/></svg>动态输入</button>
      </div>
      <div class="group offset-group">
        <i class="grip"></i>
        <label class="combo narrow"><select aria-label="偏移方式"><option>不偏移</option></select></label>
        <i class="sep"></i>
        <label for="offx">X=</label><span class="spin"><input id="offx" value="0" disabled><i class="arrows"></i></span><span class="unit">mm</span>
        <label for="offy">Y=</label><span class="spin"><input id="offy" value="0" disabled><i class="arrows"></i></span><span class="unit">mm</span>
        <i class="sep"></i>
        <input type="checkbox" id="rot"><label for="rot" class="rot">旋转</label>
        <span class="spin wide"><input id="ang" value="0.000" aria-label="旋转角度" disabled><i class="arrows"></i></span><span class="unit">°</span>
      </div>
    </div>
  </section>
</div>

<footer class="status">
  <span class="c-xy"><b>X=163367 Y=18824</b></span>
  <span class="c-h">层高<b>:3.55m</b></span>
  <span class="c-b">底标高<b>:-3.58m</b></span>
  <span class="c-n"><b>0</b></span>
  <span class="c-fill"></span>
  <span class="c-fps"><b>522 FPS</b></span>
</footer>

<div class="taskbar">
  <button class="start" aria-label="开始"><svg width="16" height="16"><path d="M0 2.500l7-1v6H0zM8 1.300L16 0v7.500H8zM0 8.500h7v6l-7-1zM8 8.500h8V16l-8-1.200z" fill="#fff"/></svg></button>
  <label class="search">
    <svg width="22" height="22"><circle cx="11" cy="11" r="9" fill="none" stroke="#fff" stroke-width="3"/></svg>
    <input type="text" placeholder="在这里输入你要搜索的内容" aria-label="搜索">
    <svg width="12" height="18"><rect x="3.500" y="1.500" width="5" height="10" fill="none" stroke="#aaa"/><path d="M.5 8v5.500h11V8M6 14v3M3 16.500h6" fill="none" stroke="#aaa"/></svg>
  </label>
  <div class="apps">
    <button aria-label="应用"><svg width="24" height="24"><g fill="#e8e8e8"><rect x="2" y="2" width="10" height="9" rx="4"/><rect x="13" y="2" width="9" height="10" rx="4"/><rect x="12" y="13" width="10" height="9" rx="4"/><rect x="2" y="12" width="9" height="10" rx="4"/><rect x="8" y="8" width="8" height="8"/></g><path d="M12 12C9 9 11 4 14 3M12 12c3-3 8-1 9 2M12 12c3 3 1 8-2 9M12 12c-3 3-8 1-9-2" fill="none" stroke="#04090c"/></svg></button>
    <button aria-label="应用"><svg width="24" height="24" fill="none" stroke="#ddd" stroke-width="1.500"><path d="M21 5c-2 1-4-2-9-1C4 5 1 13 5 18c4 5 12 4 14-2 1-5-3-8-7-7-4 1-4 6-1 7 2 1 4-1 3-3M18 7c-5-2-11 1-11 6"/></svg></button>
    <button class="edge" aria-label="Edge"><svg width="24" height="24"><path d="M2 11C4 3 9 1 13 1c6 0 9 4 9 9v3H9c1 6 8 6 12 3v5c-9 4-16 0-16-7 0-3 2-6 5-7-4 0-6 2-8 4zm7-2h7c0-5-7-4-7 0z" fill="#0a78d6"/></svg></button>
    <button aria-label="应用商店"><svg width="24" height="24"><path d="M2 6l20-2v19L2 21z" fill="#fff"/><path d="M7 6c0-6 8-6 9-1" fill="none" stroke="#fff" stroke-width="1.500"/><path d="M6 10l5-.5V14H6zM12 9.300l6-.5V14h-6zM6 15h5v4.500L6 19zM12 15h6v5l-6-.5z" fill="#04090c"/></svg></button>
    <button aria-label="资源管理器"><svg width="24" height="24"><path d="M1 3h8l2 2h11v16H1z" fill="#ffe391"/><path d="M1 3h8v3H1z" fill="#f3bc3c"/><path d="M5 13h14v8h-4v-4H9v4H5z" fill="#33a9e0"/></svg></button>
    <button class="run" aria-label="应用"><svg width="24" height="24"><path d="M23 1c-1 5-5 5-9 5-5 0-6 10 0 11 4 0 5-3 2-6 6-1 8 4 5 8-5 6-16 5-19-2C-1 7 7 0 15 2c3 1 6 1 8-1z" fill="#1da1f2"/></svg></button>
    <button class="run active" aria-label="广联达"><svg width="24" height="24"><use href="#logo"/></svg></button>
    <button class="run" aria-label="应用"><svg width="24" height="24"><rect width="24" height="24" rx="2" fill="#f29a16"/><path d="M3 5l13-1 1 16-12 2z" fill="#fff8e5"/><path d="M6 10l8-1M6 13l7-1M7 16l5-1" stroke="#7a4520"/><path d="M11 15l8-12 3 2-8 11-4 2z" fill="#f4c33b" stroke="#6a3812"/></svg></button>
    <button class="run" aria-label="浏览器"><svg width="24" height="24"><circle cx="12" cy="12" r="10" fill="#4fb62b" stroke="#dff5d2"/><path d="M7 13h11c0-9-12-9-12 0 0 6 8 7 11 3" fill="none" stroke="#fff" stroke-width="2.500"/><path d="M2 22c-3-8 10-21 20-21" fill="none" stroke="#3a9a22" stroke-width="1.500"/></svg></button>
  </div>
  <div class="tray">
    <div class="load">33%<br>CPU使用</div>
    <svg width="16" height="16"><path d="M2 11l6-6 6 6" fill="none" stroke="#fff" stroke-width="1.300"/></svg>
    <svg width="16" height="16"><path d="M6 4.500h8.500v8H4.500V9M2.500 1v3M5.500 1v3" fill="none" stroke="#fff"/><path d="M1 4h6v2L5 8H3L1 6zM8 6h5v5H6V9h2zM15 7h1v3h-1z" fill="#fff"/></svg>
    <svg width="16" height="16" fill="none" stroke="#ddd"><path d="M1.500 14C1.500 7 7 2 14 2M5 14c0-5 4-9 9-9M8 14c0-3 2-6 6-6"/><path d="M11 14c0-2 1-3 3-3v3z" fill="#fff"/></svg>
    <svg width="16" height="16" fill="none" stroke="#ddd"><path d="M1 6h2l4-4v12l-4-4H1zM9.500 5c1 2 1 4 0 6M11.500 4c2 3 2 5 0 8M13.500 2c3 4 3 8 0 12"/></svg>
    <svg width="23" height="16"><path d="M.5 2.500h22v11H.5z" fill="none" stroke="#fff"/><path d="M3 5.500h17M3 8.500h17" stroke="#fff" stroke-dasharray="1 1"/><path d="M6 11.500h11" stroke="#fff"/></svg>
    <span class="lang">中</span>
    <svg class="tray-s" width="24" height="16"><use href="#sogou"/></svg>
    <time>14:14<br>2017/9/30</time>
    <svg class="action" width="16" height="16"><path d="M.5 1.500h15v11h-5l-2.500 3v-3H.5z" fill="none" stroke="#fff"/></svg>
  </div>
</div>

</body>
</html>
```
FILE: styles.css
```css
*, ::before, ::after {
  box-sizing: border-box;
}
body {
  margin: 0;
  min-height: 100vh;
  display: flex;
  flex-direction: column;
  background: #f0f0f0;
  color: #000;
  font: 12px/16px "Open Sans", "Noto Sans CJK SC", sans-serif;
  overflow: hidden;
  white-space: nowrap;
}
button, input, select {
  font: inherit;
  color: inherit;
  margin: 0;
}
button {
  border: 0;
  padding: 0;
  background: none;
}
svg {
  display: block;
  flex: none;
}
i {
  font-style: normal;
  flex: none;
}
.sprite {
  position: absolute;
  width: 0;
  height: 0;
}
.ico {
  width: 16px;
  height: 16px;
}

/* title */
.titlebar {
  position: relative;
  display: flex;
  align-items: center;
  height: 23px;
  padding-left: 2px;
  gap: 5px;
  background: #fff;
}
.titlebar h1 {
  margin: 0;
  font: 12px/16px Inter, "Noto Sans CJK SC", sans-serif;
}
.win-controls {
  display: flex;
  margin-left: auto;
}
.win-controls button {
  width: 46px;
  height: 23px;
  display: flex;
  align-items: center;
  justify-content: center;
}
.speed-ball {
  position: absolute;
  right: 358px;
  bottom: 4px;
  display: flex;
  align-items: flex-end;
  justify-content: center;
  width: 48px;
  height: 48px;
  padding-bottom: 3px;
  border: 3px solid #e4e4e4;
  border-radius: 50%;
  background: #3cc25a;
  box-shadow: 0 1px 3px #777;
  color: #fff;
  font-weight: 700;
  line-height: 12px;
}

/* menu */
.menubar {
  position: relative;
  display: flex;
  align-items: center;
  height: 30px;
  padding-left: 7px;
}
.menus {
  display: flex;
  gap: 11px;
  margin-right: 10px;
}
.tip, .account {
  align-self: stretch;
  display: flex;
  align-items: center;
  margin-top: 1px;
  background: linear-gradient(#fafafa, #f0f0f0);
  border-radius: 3px;
}
.tip {
  width: 187px;
  margin-left: auto;
  margin-right: 2px;
  justify-content: center;
}
.tip a {
  color: #663300;
  text-decoration: none;
}
.account {
  width: 240px;
  padding-left: 1px;
}
.beans {
  margin: 0 5px;
}
.ime {
  position: absolute;
  z-index: 2;
  left: 822px;
  top: 13px;
  display: flex;
}
.ime-logo {
  width: 28px;
  height: 26px;
}
.ime-bar {
  display: flex;
  align-items: center;
  gap: 6px;
  height: 23px;
  margin-top: 2px;
  padding: 0 4px;
  background: #fff;
  border: 1px solid #b9cbdc;
  color: #1a6fc4;
  font-size: 15px;
  font-weight: 700;
}

/* tool groups */
.toprow {
  display: flex;
  height: 30px;
  padding: 1px 0 2px;
}
.group {
  display: flex;
  align-items: center;
  height: 26px;
  padding-left: 3px;
  border-radius: 3px;
  background: linear-gradient(#fcfcfc, #efefef);
}
.file-group {
  flex: 0 0 151px;
  padding-left: 1px;
}
.calc-group {
  flex: 0 0 552px;
  margin-right: 2px;
}
.view-group {
  flex: 1;
  padding-left: 0;
}
.tbtn {
  display: flex;
  flex: none;
  align-items: center;
  gap: 4px;
  height: 24px;
  padding: 0 4px 0 3px;
}
.tbtn:disabled {
  color: #929292;
}
.tbtn.white {
  background: linear-gradient(90deg, #fff 50px, #f6f6f6 50px);
}
.tbtn.on {
  background: #dde9f5;
  box-shadow: inset 0 0 0 1px #0078d7;
}
.caret {
  margin-left: 2px;
  border: 3px solid transparent;
  border-top-color: currentColor;
  border-bottom: 0;
}
.caret.tight {
  margin-left: -2px;
}
.sep {
  width: 1px;
  height: 16px;
  margin: 0 2px 0 3px;
  background: #b9b9b9;
}
.file-group .sep {
  height: 24px;
}
.more {
  align-self: flex-start;
  margin: 4px 4px 0 auto;
}
.file-group .more {
  margin-right: 3px;
}
.more svg {
  width: 8px;
  height: 8px;
}
.grip {
  width: 3px;
  height: 16px;
  margin-right: 1px;
  background: repeating-linear-gradient(#b3b3b3 0 2px, transparent 2px 5px);
}
.combo {
  display: grid;
  flex: none;
  width: 69px;
  height: 23px;
  margin: 0 2px 0 1px;
}
.combo.narrow {
  width: 57px;
}
.combo.method {
  width: 54px;
}
.combo select {
  grid-area: 1 / 1;
  width: 100%;
  padding: 0 12px 0 2px;
  border: 0;
  border-radius: 0;
  appearance: none;
  background: linear-gradient(90deg, #fff, #fff) no-repeat 0 0 / calc(100% - 11px) 100% #f7f7f7;
}
.combo::after {
  content: "";
  grid-area: 1 / 1;
  place-self: center end;
  margin-right: 3px;
  border: 3px solid transparent;
  border-top-color: #000;
  border-bottom: 0;
  pointer-events: none;
}

/* sidebar */
.main {
  display: flex;
  flex: 1;
}
.sidebar {
  display: flex;
  flex-direction: column;
  width: 140px;
  margin-right: 4px;
  padding: 1px 1px 1px 0;
  font-family: "Noto Sans CJK SC", sans-serif;
}
.side-title {
  display: flex;
  align-items: center;
  height: 15px;
  margin-right: -1px;
  margin-bottom: 1px;
  padding-right: 5px;
  background: #0052e0;
  color: #fff;
}
.side-title span {
  margin-right: auto;
}
.side-title svg + svg {
  margin-left: 13px;
}
.side-btn {
  height: 22px;
  border: 1px solid #a0a0a0;
  border-top-color: #d4d4d4;
  background: #f0f0f0;
}
.side-panel {
  flex: 1;
  display: flex;
  flex-direction: column;
  margin: 1px 0;
  border: 1px solid #999;
}
.side-tools {
  height: 27px;
  padding: 5px 5px 0;
  background: linear-gradient(#fff, #efefef);
}
.tree-box {
  flex: 1;
  display: flex;
  flex-direction: column;
  border: 1px solid #828790;
  background: #fff;
}
.tree-row {
  flex: 1;
  display: flex;
}
.tree, .tree ul {
  list-style: none;
  margin: 0;
  padding: 0;
}
.tree {
  flex: 1;
  width: 117px;
  overflow: hidden;
}
b {
  font: 10px/16px "Liberation Mono", monospace;
}
.dir {
  display: flex;
  height: 16px;
  padding-left: 5px;
}
.dir .ico {
  margin-left: 7px;
  margin-right: 4px;
}
.kids {
  margin-left: 13px;
  border-left: 1px dotted #777;
}
.kids ul {
  margin-left: 17px;
  border-left: 1px dotted #777;
}
.kids ul li {
  display: flex;
  height: 16px;
  align-items: center;
}
.kids ul li::before {
  content: "";
  flex: 0 0 9px;
  margin-right: 3px;
  border-top: 1px dotted #777;
}
.kids .ico {
  margin-right: 4px;
}
.kids b {
  padding-top: 2px;
}
.kids .current {
  background: linear-gradient(#d8d8d8, #d8d8d8) no-repeat 11px 0;
}
.chev {
  width: 12px;
  height: 16px;
  display: flex;
  align-items: center;
  justify-content: center;
}
.chev::before {
  content: "";
  width: 6px;
  height: 6px;
  border: solid #9a9a9a;
  border-width: 1px 1px 0 0;
  transform: rotate(45deg);
}
.open .chev::before, .down::before {
  border-color: #333;
  border-width: 2px 2px 0 0;
  transform: rotate(135deg);
}
.up::before, .left::before, .right::before {
  border-color: #444;
  border-width: 2px 2px 0 0;
}
.up::before {
  transform: rotate(-45deg);
}
.left::before {
  transform: rotate(-135deg);
}
.vbar {
  width: 17px;
  display: flex;
  flex-direction: column;
  align-items: center;
  background: #f0f0f0;
}
.vtrack {
  flex: 1;
  width: 15px;
  padding-top: 34px;
}
.vthumb {
  height: 80%;
  background: #cdcdcd;
}
.hbar {
  display: flex;
  align-items: center;
  height: 17px;
  padding-left: 4px;
  background: #f0f0f0;
}
.hthumb {
  width: 72px;
  height: 15px;
  margin: 0 11px 0 3px;
  background: #cdcdcd;
}

/* work area */
.work {
  flex: 1;
  display: flex;
  flex-direction: column;
  min-width: 0;
}
.rows {
  display: flex;
  flex-direction: column;
  align-items: flex-start;
  gap: 2px;
  padding: 1px 0 2px 1px;
}
.rows .group {
  padding-right: 1px;
}
.split-row {
  display: flex;
  gap: 3px;
}
.axis-group {
  margin-left: 72px;
}
.stub {
  width: 30px;
}
.view {
  flex: 1;
  position: relative;
  margin-right: 1px;
  background: #000;
}
.scene {
  position: absolute;
  width: 100%;
  height: 100%;
}
.axis-text, .dim-text {
  fill: #e4e4e4;
  font: 14px Roboto, sans-serif;
  text-anchor: middle;
}
.dim-text {
  font-size: 15px;
}
.snapbar {
  display: flex;
  height: 31px;
  padding: 2px 0 0 1px;
}
.offset-group {
  margin-left: 247px;
  color: #6d6d6d;
}
.offset-group .combo {
  color: #000;
}
.spin {
  display: flex;
  align-items: center;
  width: 58px;
  height: 23px;
  margin: 0 2px 0 5px;
  padding-right: 4px;
  border: 1px solid #6d6d6d;
}
.spin.wide {
  width: 68px;
}
.spin input {
  flex: 1;
  width: 0;
  padding: 0 10px 0 0;
  border: 0;
  background: none;
  color: #777;
  text-align: right;
}
.arrows {
  display: grid;
  gap: 9px;
}
.arrows::before, .arrows::after {
  content: "";
  border: 3px solid transparent;
}
.arrows::before {
  border-top: 0;
  border-bottom-color: #555;
}
.arrows::after {
  border-bottom: 0;
  border-top-color: #555;
}
.unit {
  margin-right: 4px;
}
.offset-group input[type="checkbox"] {
  appearance: none;
  width: 11px;
  height: 11px;
  border: 1px solid #8a8a8a;
}
.rot {
  margin-left: 6px;
  color: #000;
}

/* status */
.status {
  display: flex;
  gap: 2px;
  height: 22px;
  padding-top: 2px;
  background: #fff;
}
.status span {
  flex: none;
  padding: 1px 0 0 1px;
  border: 1px solid #d7d7d7;
  border-left-color: #e4e4e4;
  background: linear-gradient(#fdfdfd, #efefef);
}
.status .c-xy { width: 148px; }
.status .c-h { width: 78px; }
.status .c-b { width: 98px; }
.status .c-n { width: 48px; }
.status .c-fill { flex: 1; }
.status .c-fps { width: 70px; }

/* taskbar */
.taskbar {
  display: flex;
  align-items: stretch;
  height: 40px;
  background: #020b0e;
  color: #fff;
}
.start {
  width: 48px;
  display: flex;
  align-items: center;
  justify-content: center;
  background: #000;
}
.search {
  display: flex;
  align-items: center;
  width: 344px;
  padding: 0 14px 0 9px;
  background: #333;
}
.search input {
  flex: 1;
  padding: 0 0 0 5px;
  border: 0;
  background: none;
  font-size: 14px;
}
.search input::placeholder {
  color: #a0a0a0;
}
.apps {
  display: flex;
  gap: 1px;
  padding-left: 2px;
}
.apps button {
  width: 48px;
  display: flex;
  align-items: center;
  justify-content: center;
}
.apps .edge {
  margin-left: 5px;
}
.apps .run {
  background: linear-gradient(#76b9ed, #76b9ed) no-repeat center bottom / 40px 2px;
}
.apps .active {
  background: linear-gradient(#76b9ed, #76b9ed) no-repeat center bottom / 100% 2px #333d41;
}
.tray {
  display: flex;
  align-items: center;
  gap: 8px;
  margin-left: auto;
  padding-right: 25px;
}
.load, time {
  text-align: center;
  line-height: 18px;
}
.load {
  width: 50px;
  margin-right: 7px;
}
.lang {
  width: 20px;
  text-align: center;
}
.tray-s {
  margin-right: 7px;
}
.action {
  margin-left: 10px;
}
```
